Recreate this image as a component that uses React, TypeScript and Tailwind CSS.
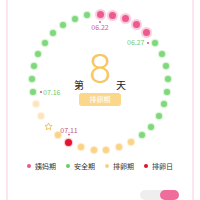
import React from "react";

type Kind = "period" | "safe" | "ov" | "day" | "star" | "ovPale";

const kindOf = (i: number): Kind => {
  if (i <= 4) return "period";
  if (i <= 13) return "safe";
  if (i <= 18) return "ov";
  if (i === 19) return "day";
  if (i === 20) return "ov";
  if (i === 21) return "star";
  if (i <= 23) return "ovPale";
  return "safe";
};

const dotClass: Record<Kind, string> = {
  period: "w-[7px] h-[7px] rounded-full bg-[#ec5a8f] shadow-[0_0_1px_2px_#fbcadb]",
  safe: "w-[6px] h-[6px] rounded-full bg-[#80d87c] shadow-[0_0_1px_1px_#d2f2d0]",
  ov: "w-[6px] h-[6px] rounded-full bg-[#fad385] shadow-[0_0_1px_1px_#fde9c8]",
  day: "w-[7px] h-[7px] rounded-full bg-[#e3142d] shadow-[0_0_1px_1px_#f8bcc5]",
  star: "w-[9px] h-[9px]",
  ovPale: "w-[6px] h-[6px] rounded-full bg-[#fce5bd] shadow-[0_0_1px_1px_#fef2de]",
};

const sizeOf: Record<Kind, number> = {
  period: 7,
  safe: 6,
  ov: 6,
  day: 7,
  star: 9,
  ovPale: 6,
};

const CX = 100;
const CY = 82;
const R = 68;
const OFF = 8;

function Dots() {
  const items = [];
  for (let i = 0; i < 33; i++) {
    const a = ((i * 360) / 33) * (Math.PI / 180);
    const x = CX + R * Math.sin(a);
    const y = CY - R * Math.cos(a);
    const k = kindOf(i);
    const s = sizeOf[k];
    items.push(
      <div
        key={i}
        className={"absolute " + dotClass[k]}
        style={{ left: x - OFF - s / 2, top: y - s / 2 }}
      >
        {k === "star" && (
          <svg viewBox="0 0 24 24" width="9" height="9">
            <path
              d="M12 2.5l2.9 6.1 6.6.8-4.9 4.6 1.3 6.6L12 17.3l-5.9 3.3 1.3-6.6-4.9-4.6 6.6-.8z"
              fill="none"
              stroke="#efbb52"
              strokeWidth="2.4"
              strokeLinejoin="round"
            />
          </svg>
        )}
      </div>
    );
  }
  return <>{items}</>;
}

export default function App() {
  const font = { fontFamily: '"Noto Sans CJK SC", "Noto Sans", sans-serif' };
  return (
    <div className="w-[200px] h-[200px] bg-white overflow-hidden px-[6px]" style={font}>
      <div className="h-full border-x-2 border-[#fde4ed] flex flex-col">
        <div className="relative h-[158px]">
          <Dots />
          <div className="absolute left-[91px] top-[21px] w-[2px] h-[2px] rounded-full bg-[#d8609a]" />
          <div className="absolute left-[82px] top-[23px] w-[20px] text-center text-[7px] leading-[8px] text-[#cf6092]">
            06.22
          </div>
          <div className="absolute left-[119px] top-[38px] text-[7px] leading-[8px] text-[#74c96f]">06.27</div>
          <div className="absolute left-[139px] top-[41.5px] w-[2px] h-[2px] rounded-full bg-[#e2467c]" />
          <div className="absolute left-[32px] top-[90.5px] w-[2px] h-[2px] rounded-full bg-[#e2467c]" />
          <div className="absolute left-[35px] top-[87.5px] text-[7px] leading-[8px] text-[#74c96f]">07.16</div>
          <div className="absolute left-[51px] top-[126px] w-[20px] text-center text-[7px] leading-[8px] text-[#c0577a]">
            07.11
          </div>
          <div className="absolute left-[59.7px] top-[134px] w-0 h-0 border-x-[1.5px] border-x-transparent border-t-[2px] border-t-[#d8456f]" />
          <div className="flex flex-col items-center pt-[50px]">
            <div className="flex items-end gap-[5px]">
              <span className="text-[10px] leading-[12px] text-[#222] mb-[-1px]">第</span>
              <span
                className="text-[40px] leading-none font-light text-[#f8c65c]"
                style={{ fontFamily: "Roboto, sans-serif" }}
              >
                8
              </span>
              <span className="text-[10px] leading-[12px] text-[#222] mb-[-1px]">天</span>
            </div>
            <div className="mt-[3px] w-[42px] h-[13px] rounded-[3px] bg-[#fbd78c] flex items-center justify-center text-[7px] text-white">
              排卵期
            </div>
          </div>
        </div>
        <div className="mt-[9px] h-[10px] flex items-center justify-center gap-[10px] text-[7px] text-[#333]">
          <div className="flex items-center gap-[4px]">
            <span className="w-[4px] h-[4px] rounded-full bg-[#e9578c]" />
            <span>姨妈期</span>
          </div>
          <div className="flex items-center gap-[4px]">
            <span className="w-[4px] h-[4px] rounded-full bg-[#63cf5f]" />
            <span>安全期</span>
          </div>
          <div className="flex items-center gap-[4px]">
            <span className="w-[4px] h-[4px] rounded-full bg-[#f8d187]" />
            <span>排卵期</span>
          </div>
          <div className="flex items-center gap-[4px]">
            <span className="w-[4px] h-[4px] rounded-full bg-[#d9142c]" />
            <span>排卵日</span>
          </div>
        </div>
        <div className="mt-[19px] flex justify-end pr-[13px]">
          <div className="w-[39px] h-[10px] rounded-full bg-[#eeeeee] flex justify-end">
            <div className="w-[19px] h-[10px] rounded-full bg-[#f06c9b]" />
          </div>
        </div>
      </div>
    </div>
  );
}
